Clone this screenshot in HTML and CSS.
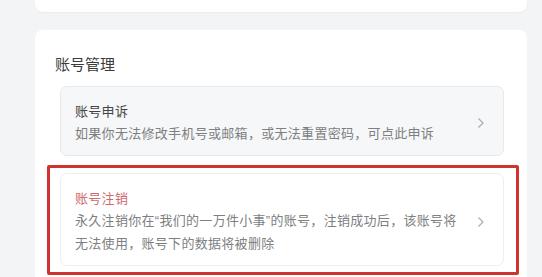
FILE: index.html
```html
<!DOCTYPE html>
<html lang="zh-CN">
<head>
    <meta charset="UTF-8">
    <meta name="viewport" content="width=device-width, initial-scale=1.0">
    <title>账号管理</title>
    <link rel="stylesheet" href="styles.css">
</head>
<body>
    <div class="card card-top"></div>

    <div class="card">
        <h2 class="card-title">账号管理</h2>

        <div class="item">
            <div class="item-text">
                <div class="item-name">账号申诉</div>
                <div class="item-desc">如果你无法修改手机号或邮箱，或无法重置密码，可点此申诉</div>
            </div>
            <svg class="arrow" width="8" height="12" viewBox="0 0 8 12"><path d="M1.5 1.5 L6 6 L1.5 10.5" fill="none" stroke="#a9abae" stroke-width="1.2"/></svg>
        </div>

        <div class="item item-danger highlight">
            <div class="item-text">
                <div class="item-name">账号注销</div>
                <div class="item-desc">永久注销你在“我们的一万件小事”的账号，注销成功后，该账号将无法使用，账号下的数据将被删除</div>
            </div>
            <svg class="arrow" width="8" height="12" viewBox="0 0 8 12"><path d="M1.5 1.5 L6 6 L1.5 10.5" fill="none" stroke="#a9abae" stroke-width="1.2"/></svg>
        </div>
    </div>
</body>
</html>
```

FILE: styles.css
```css
body {
    margin: 0;
    padding: 0 15px 0 35px;
    background: #f3f4f6;
    font-family: "Liberation Sans", "Noto Sans CJK SC", sans-serif;
    color: #333;
}
.card {
    background: #fff;
    border-radius: 8px;
    padding: 24px 23px 20px 25px;
    margin-top: 18px;
}
.card-top {
    height: 12px;
    padding: 0;
    margin-top: 0;
    border-radius: 0 0 8px 8px;
    box-shadow: 0 1px 2px rgba(0, 0, 0, 0.04);
}
.card-title {
    margin: 0 0 10px -5px;
    font-size: 15px;
    font-weight: normal;
    line-height: 22px;
    color: #3a3a3a;
}
.item {
    display: flex;
    align-items: center;
    gap: 16px;
    padding: 14px 18px 10px 14px;
    background: #f6f7f8;
    border: 1px solid #e7e8ea;
    border-radius: 7px;
    margin-bottom: 17px;
    letter-spacing: 0.3px;
}
.item-text {
    flex: 1;
}
.item-name {
    font-size: 13px;
    line-height: 21px;
    color: #454545;
}
.item-desc {
    font-size: 13px;
    line-height: 23px;
    color: #7d7f82;
}
.item-danger {
    background: #fff;
    border-color: #eceef0;
}
.item-danger .item-name {
    color: #d06a6d;
}
.arrow {
    flex-shrink: 0;
}
.highlight {
    position: relative;
}
.highlight::after {
    content: "";
    position: absolute;
    top: -9px;
    left: -14px;
    right: -16px;
    bottom: -10px;
    border: 3px solid #d0322d;
    border-radius: 2px;
    pointer-events: none;
}
```
